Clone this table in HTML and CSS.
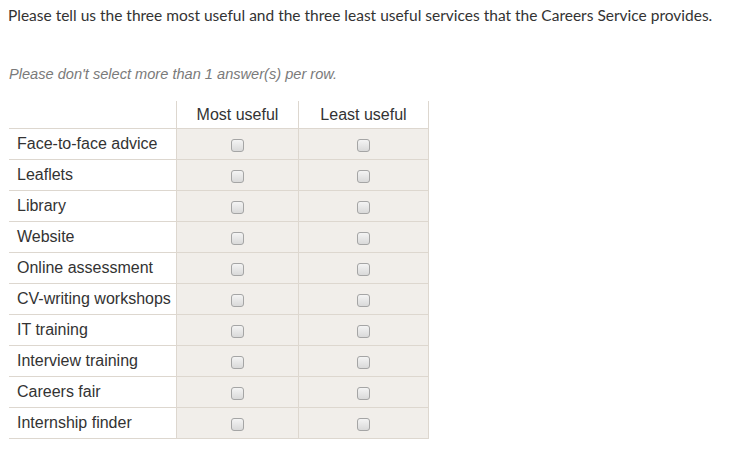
FILE: index.html
```html
<!DOCTYPE html>
<html>
<head>
<meta charset="utf-8">
<link rel="stylesheet" href="styles.css">
</head>
<body>
<div class="question">
  <p class="title">Please tell us the three most useful and the three least useful services that the Careers Service provides.</p>
  <p class="note">Please don't select more than 1 answer(s) per row.</p>
  <table class="grid">
    <thead>
      <tr><th class="blank"></th><th>Most useful</th><th>Least useful</th></tr>
    </thead>
    <tbody>
      <tr><td class="label">Face-to-face advice</td><td><span class="cb"></span></td><td><span class="cb"></span></td></tr>
      <tr><td class="label">Leaflets</td><td><span class="cb"></span></td><td><span class="cb"></span></td></tr>
      <tr><td class="label">Library</td><td><span class="cb"></span></td><td><span class="cb"></span></td></tr>
      <tr><td class="label">Website</td><td><span class="cb"></span></td><td><span class="cb"></span></td></tr>
      <tr><td class="label">Online assessment</td><td><span class="cb"></span></td><td><span class="cb"></span></td></tr>
      <tr><td class="label">CV-writing workshops</td><td><span class="cb"></span></td><td><span class="cb"></span></td></tr>
      <tr><td class="label">IT training</td><td><span class="cb"></span></td><td><span class="cb"></span></td></tr>
      <tr><td class="label">Interview training</td><td><span class="cb"></span></td><td><span class="cb"></span></td></tr>
      <tr><td class="label">Careers fair</td><td><span class="cb"></span></td><td><span class="cb"></span></td></tr>
      <tr><td class="label">Internship finder</td><td><span class="cb"></span></td><td><span class="cb"></span></td></tr>
    </tbody>
  </table>
</div>
</body>
</html>
```

FILE: styles.css
```css
html, body {
  margin: 0;
  padding: 0;
  background: #ffffff;
}

.question {
  padding: 0 8px;
}

.title {
  margin: 0;
  padding-top: 6px;
  font-family: Lato, "Liberation Sans", sans-serif;
  font-size: 15.5px;
  line-height: 18px;
  color: #333333;
}

.note {
  margin: 0;
  padding-top: 41px;
  padding-left: 1px;
  font-family: "Liberation Sans", Arial, sans-serif;
  font-style: italic;
  font-size: 14.6px;
  line-height: 18px;
  color: #7a7a7a;
}

.grid {
  margin-top: 18px;
  margin-left: 1px;
  border-collapse: collapse;
  font-family: "Liberation Sans", Arial, sans-serif;
  font-size: 16px;
  color: #333333;
}

.grid th {
  height: 27px;
  padding: 0;
  font-weight: normal;
  text-align: center;
  vertical-align: middle;
  border-left: 1px solid #ddd7cf;
  border-right: 1px solid #ddd7cf;
  border-bottom: 1px solid #ddd7cf;
}

.grid th.blank {
  border-left: none;
  width: 167px;
}

.grid th:nth-child(2) {
  width: 121px;
}

.grid th:nth-child(3) {
  width: 129px;
}

.grid td {
  height: 30px;
  padding: 0;
  text-align: center;
  vertical-align: middle;
  background: #f1eeea;
  border: 1px solid #ddd7cf;
}

.grid td.label {
  text-align: left;
  padding-left: 8px;
  background: #ffffff;
  border-left: none;
}

.cb {
  display: inline-block;
  width: 11px;
  height: 11px;
  border: 1px solid #a5a5a5;
  border-radius: 3px;
  background: linear-gradient(#f4f4f4, #d9d9d9);
  vertical-align: middle;
  position: relative;
  top: 1px;
}
```
